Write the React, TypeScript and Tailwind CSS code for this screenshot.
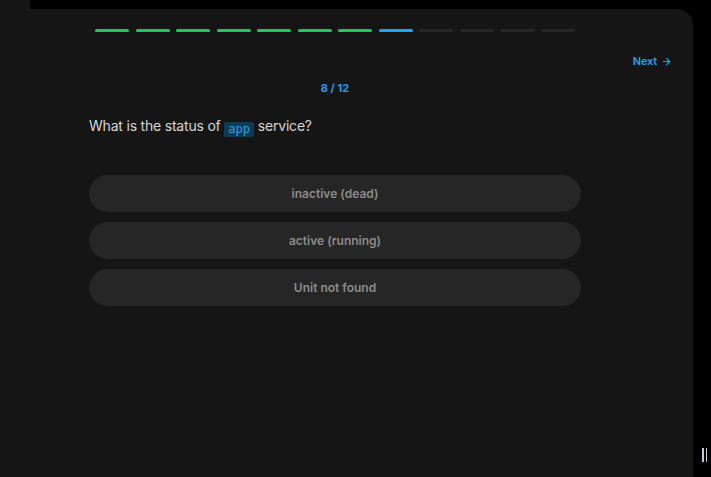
const steps = Array.from({ length: 12 }, (_, i) => i);
const current = 7;

const options = ['inactive (dead)', 'active (running)', 'Unit not found'];

export default function App() {
  return (
    <div className="relative w-full h-screen bg-black overflow-hidden font-['Inter',sans-serif]">
      {/* top strip of the sidebar */}
      <div className="w-[30px] h-[9px] bg-[#151515]" />

      <div className="w-[693px] h-[468px] bg-[#151515] rounded-tr-[16px] flex flex-col pl-[89px] pr-[21px] pt-[20px]">
        {/* progress */}
        <div className="w-[492px] flex justify-center">
          <div className="w-[480px] flex gap-[6.5px]">
            {steps.map((i) => (
              <div
                key={i}
                className={
                  i < current
                    ? 'flex-1 h-[3px] rounded-full bg-[#22c55e]'
                    : i === current
                      ? 'flex-1 h-[3px] rounded-full bg-[#1ea4f5]'
                      : 'flex-1 h-[3px] rounded-full bg-[#262626]'
                }
              />
            ))}
          </div>
        </div>

        <div className="flex justify-end mt-[22px] h-[14px]">
          <button className="flex items-center gap-[4px] text-[11px] font-semibold tracking-[-0.2px] text-[#1ea4f5] leading-none">
            Next
            <svg width="11" height="11" viewBox="0 0 24 24" fill="none" stroke="currentColor" strokeWidth="2.5" strokeLinecap="round" strokeLinejoin="round">
              <path d="M5 12h14" />
              <path d="m12 5 7 7-7 7" />
            </svg>
          </button>
        </div>

        <div className="w-[492px] text-center mt-[15px] text-[11px] font-bold text-[#1e9ff0] leading-none">
          8 / 12
        </div>

        <p className="mt-[22px] text-[14px] tracking-[-0.2px] text-[#d6d6d6] leading-[20px]">
          What is the status of{' '}
          <code className="inline-block px-[4px] h-[15px] leading-[15px] rounded-[2px] bg-[#0f3a52] text-[#2fa0e6] text-[12px] tracking-normal font-['DejaVu_Sans_Mono',monospace] align-[-2px]">
            app
          </code>{' '}
          service?
        </p>

        <div className="mt-[38px] w-[492px] flex flex-col gap-[10px]">
          {options.map((o) => (
            <button
              key={o}
              className="h-[37px] w-full rounded-full bg-[#262626] text-[12px] font-semibold text-[#8c8c8c]"
            >
              {o}
            </button>
          ))}
        </div>
      </div>

      {/* resize handle */}
      <div className="absolute left-[702px] top-[448px] flex gap-[2px]">
        <div className="w-[1.5px] h-[14px] bg-[#c8c8d0]" />
        <div className="w-[1.5px] h-[14px] bg-[#c8c8d0]" />
      </div>
    </div>
  );
}
